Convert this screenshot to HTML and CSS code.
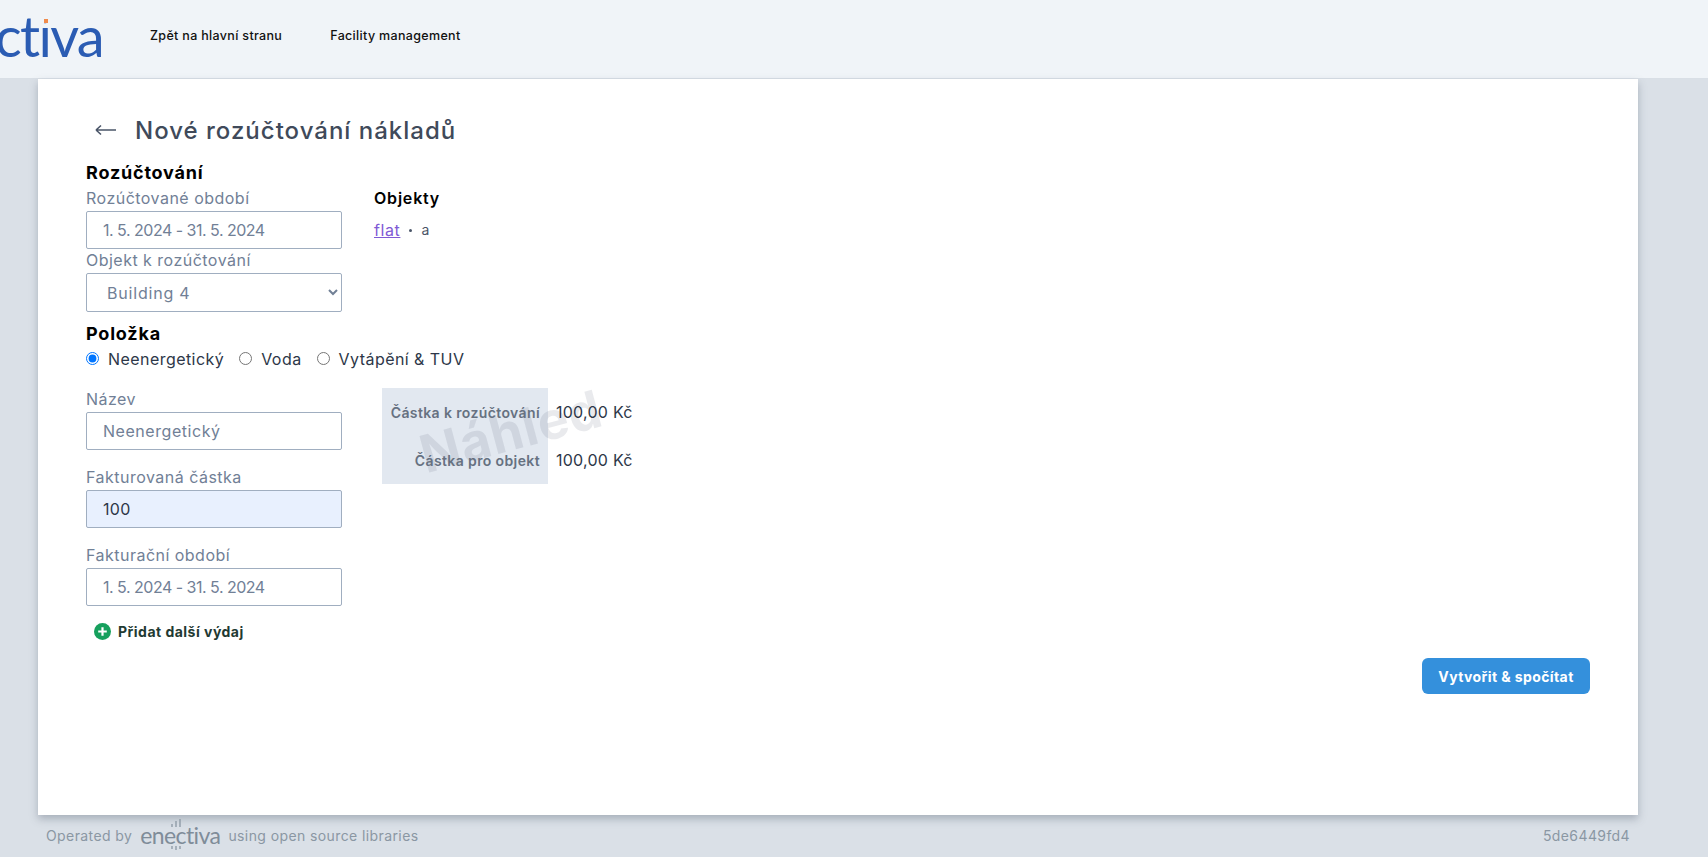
FILE: index.html
```html
<!DOCTYPE html>
<html lang="cs">
<head>
  <meta charset="utf-8">
  <title>Nové rozúčtování nákladů</title>
  <link rel="stylesheet" href="styles.css">
</head>
<body>
  <header class="topbar">
    <a class="logo">ctiva<span class="logo-dot"></span></a>
    <nav class="topnav">
      <a>Zpět na hlavní stranu</a>
      <a>Facility management</a>
    </nav>
  </header>

  <main class="card">
    <div class="title-row">
      <svg class="back" width="22" height="12" viewBox="0 0 22 12">
        <path d="M1 6H21M1 6L6 1.5M1 6L6 10.5" fill="none" stroke="#4a5568" stroke-width="1.6"/>
      </svg>
      <h1>Nové rozúčtování nákladů</h1>
    </div>

    <h2>Rozúčtování</h2>
    <div class="columns">
      <div class="fields">
        <label class="field">
          <span>Rozúčtované období</span>
          <input class="input date" value="1. 5. 2024 - 31. 5. 2024">
        </label>
        <label class="field">
          <span>Objekt k rozúčtování</span>
          <select class="input select"><option>Building 4</option></select>
        </label>
      </div>
      <div class="objects">
        <h3>Objekty</h3>
        <p><a href="#">flat</a><span class="sep"></span><span class="obj-name">a</span></p>
      </div>
    </div>

    <h2 class="item-title">Položka</h2>
    <div class="radios">
      <label><input type="radio" name="kind" checked> Neenergetický</label>
      <label><input type="radio" name="kind"> Voda</label>
      <label><input type="radio" name="kind"> Vytápění &amp; TUV</label>
    </div>

    <div class="columns item-columns">
      <div class="fields spaced">
        <label class="field">
          <span>Název</span>
          <input class="input" value="Neenergetický">
        </label>
        <label class="field">
          <span>Fakturovaná částka</span>
          <input class="input filled" value="100">
        </label>
        <label class="field">
          <span>Fakturační období</span>
          <input class="input date" value="1. 5. 2024 - 31. 5. 2024">
        </label>
        <a class="add-row">
          <svg width="17" height="17" viewBox="0 0 17 17">
            <circle cx="8.5" cy="8.5" r="8.5" fill="#16a05d"/>
            <path d="M8.5 4.2V12.8M4.2 8.5H12.8" stroke="#fff" stroke-width="2.2"/>
          </svg>
          Přidat další výdaj
        </a>
      </div>
      <div class="preview">
        <div class="watermark">Náhled</div>
        <div class="preview-keys">
          <span>Částka k rozúčtování</span>
          <span>Částka pro objekt</span>
        </div>
        <div class="preview-values">
          <span>100,00 Kč</span>
          <span>100,00 Kč</span>
        </div>
      </div>
    </div>

    <div class="actions">
      <button class="btn">Vytvořit &amp; spočítat</button>
    </div>
  </main>

  <footer class="footer">
    <div class="operated">
      Operated by
      <span class="mini-logo">
        enectiva
        <svg class="bars-top" width="12" height="8" viewBox="0 0 12 8"><path d="M2 8V5M6 8V2M10 8V0" stroke="#8a97a3" stroke-width="1.3"/></svg>
        <svg class="bars-bottom" width="12" height="4" viewBox="0 0 12 4"><path d="M2 0V3M6 0V4M10 0V3" stroke="#8a97a3" stroke-width="1.3"/></svg>
      </span>
      using open source libraries
    </div>
    <div>5de6449fd4</div>
  </footer>
</body>
</html>
```

FILE: styles.css
```css
* {
  box-sizing: border-box;
}

html, body {
  height: 100%;
}

body {
  margin: 0;
  background: #dae0e7;
  font-family: Inter, "Open Sans", sans-serif;
  font-size: 16px;
  color: #4a5568;
}

a {
  text-decoration: none;
}

.topbar {
  display: flex;
  align-items: center;
  height: 79px;
  background: #f0f4f8;
  border-bottom: 1px solid #d9dfe6;
  overflow: hidden;
}

.logo {
  position: relative;
  width: 155px;
  margin-left: -5px;
  margin-bottom: 6px;
  font-family: Lato, sans-serif;
  font-weight: 400;
  font-size: 56px;
  letter-spacing: -1.7px;
  line-height: 1;
  color: #2b5cb3;
}

/* covers the font's round i-dot, the square sits on top of it */
.logo-dot {
  position: absolute;
  left: 46px;
  top: 3px;
  width: 12px;
  height: 12px;
  background: #f0f4f8;
}

.logo-dot::after {
  content: "";
  position: absolute;
  left: 3px;
  bottom: 0;
  width: 4px;
  height: 4px;
  background: #f08a4b;
}

.topnav {
  display: flex;
  gap: 48px;
  margin-bottom: 7px;
  font-size: 12.5px;
  font-weight: 500;
  letter-spacing: 0.33px;
  color: #111;
}

.card {
  width: 1600px;
  height: 736px;
  margin-left: 38px;
  padding: 32px 48px 0;
  background: #fff;
  box-shadow: 0 4px 8px rgba(74, 85, 104, 0.35);
}

.title-row {
  display: flex;
  align-items: center;
  gap: 18px;
  height: 38px;
  padding-left: 9px;
}

h1 {
  margin: 0;
  font-size: 24px;
  font-weight: 500;
  letter-spacing: 1px;
  color: #404a5a;
}

h2 {
  margin: 11px 0 1px;
  font-size: 18px;
  line-height: 26px;
  font-weight: 700;
  letter-spacing: 0.8px;
  color: #000;
}

h3 {
  margin: 0;
  font-size: 16px;
  line-height: 22px;
  padding-bottom: 2px;
  font-weight: 600;
  letter-spacing: 0.8px;
  color: #000;
}

.columns {
  display: flex;
}

.fields {
  width: 256px;
}

.fields.spaced .field {
  margin-bottom: 16px;
}

.field {
  display: block;
}

.field span {
  display: block;
  line-height: 22px;
  padding-bottom: 2px;
  letter-spacing: 0.48px;
  color: #718096;
}

.input {
  display: block;
  width: 256px;
  height: 38px;
  padding: 0 16px;
  border: 1px solid #a0aec0;
  border-radius: 2px;
  background: #fff;
  font-family: inherit;
  font-size: 16px;
  letter-spacing: 0.55px;
  color: #718096;
}

.date {
  letter-spacing: -0.5px;
}

.select {
  height: 39px;
  letter-spacing: 0.8px;
}

.filled {
  background: #e8f0fe;
  letter-spacing: 0.3px;
  color: #2d3748;
}

.objects {
  margin-left: 32px;
}

.objects p {
  display: flex;
  align-items: center;
  margin: 8px 0 0;
  line-height: 22px;
}

.objects a {
  letter-spacing: 0.6px;
  color: #805ad5;
  text-decoration: underline;
}

.sep {
  width: 3px;
  height: 3px;
  margin: 0 9px;
  border-radius: 50%;
  background: #4a5568;
}

.obj-name {
  font-size: 14px;
}

.item-title {
  margin: 9px 0 0;
}

.radios {
  display: flex;
  gap: 15px;
  line-height: 24px;
  letter-spacing: 0.45px;
  color: #2d3748;
}

.radios input {
  margin: 0 4px 0 0;
}

.item-columns {
  margin-top: 17px;
}

.add-row {
  display: flex;
  align-items: center;
  gap: 7px;
  height: 20px;
  margin: -1px 0 1px;
  padding-left: 8px;
  font-size: 14px;
  font-weight: 700;
  letter-spacing: 0.48px;
  color: #1f3a33;
}

.preview {
  position: relative;
  display: flex;
  align-self: flex-start;
  height: 96px;
  margin-left: 40px;
  background: linear-gradient(#e2e8f0, #e2e8f0) no-repeat left / 166px 100%;
}

.preview-keys,
.preview-values {
  position: relative;
  display: flex;
  flex-direction: column;
  justify-content: space-around;
}

.preview-keys {
  width: 166px;
  padding-right: 8px;
  text-align: right;
  font-size: 14px;
  font-weight: 600;
  letter-spacing: 0.38px;
  color: #667181;
}

.preview-values {
  padding-left: 8px;
  font-size: 16px;
  letter-spacing: 0.25px;
  color: #2d3748;
}

.watermark {
  position: absolute;
  left: 36px;
  top: 12px;
  font-size: 52px;
  font-weight: 700;
  letter-spacing: 1px;
  color: rgba(74, 85, 104, 0.12);
  transform: rotate(-15deg);
}

.actions {
  display: flex;
  justify-content: flex-end;
  margin-top: 16px;
}

.btn {
  width: 168px;
  height: 36px;
  border: 0;
  border-radius: 6px;
  background: #3490dc;
  font-family: inherit;
  font-size: 14px;
  font-weight: 700;
  letter-spacing: 0.4px;
  color: #fff;
}

.footer {
  display: flex;
  justify-content: space-between;
  align-items: center;
  width: 1600px;
  height: 42px;
  margin-left: 38px;
  padding: 0 8px 2px;
  font-size: 14px;
  letter-spacing: 0.4px;
  color: #8a97a3;
}

.operated {
  display: flex;
  align-items: center;
  gap: 8px;
}

.mini-logo {
  position: relative;
  font-family: Lato, sans-serif;
  font-weight: 400;
  font-size: 23px;
  line-height: 26px;
  letter-spacing: -0.6px;
  color: #7f8c99;
}

.bars-top {
  position: absolute;
  left: 30px;
  top: -3px;
}

.bars-bottom {
  position: absolute;
  left: 30px;
  bottom: -2px;
}
```
